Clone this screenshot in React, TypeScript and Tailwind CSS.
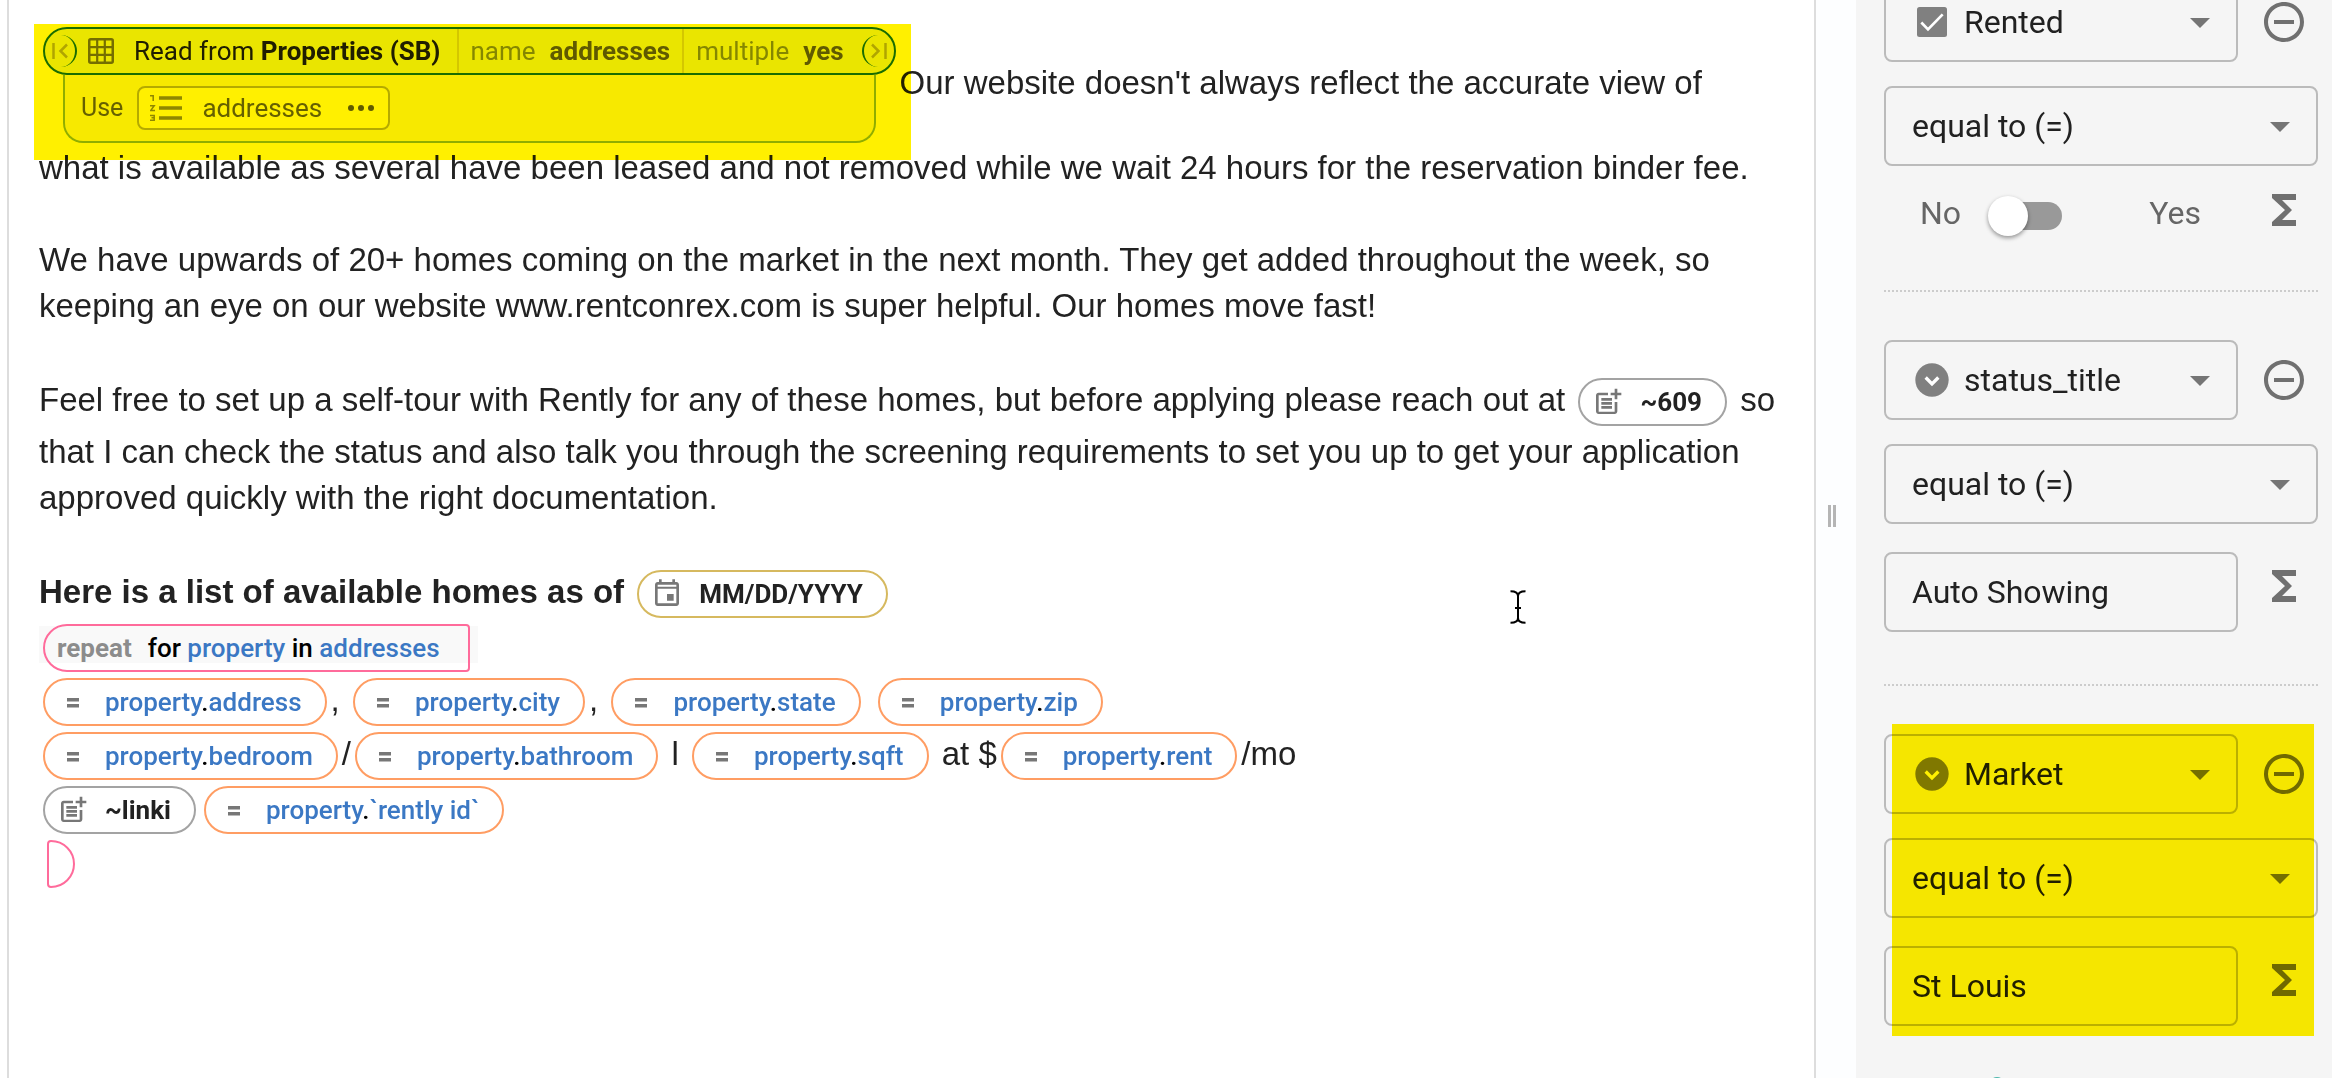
import React, { useState } from 'react';

const svgBase = 'shrink-0 fill-current';

function NoteAddIcon() {
  return (
    <svg viewBox="0 0 24 24" className={`${svgBase} size-8 text-[#777]`} aria-hidden="true">
      <path d="M17 19.22H5V7h7V5H5c-1.1 0-2 .9-2 2v12c0 1.1.9 2 2 2h12c1.1 0 2-.9 2-2v-7h-2v7.22z" />
      <path d="M19 2h-2v3h-3c.01.01 0 2 0 2h3v2.99c.01.01 2 0 2 0V7h3V5h-3V2zM7 9h8v2H7zM7 12v2h8v-2h-3zM7 15h8v2H7z" />
    </svg>
  );
}

function EqualIcon() {
  return (
    <svg viewBox="0 0 32 32" className={`${svgBase} size-8 text-[#777]`} aria-hidden="true">
      <path d="M10 12h12v3.500H10zM10 18h12v3.500H10z" />
    </svg>
  );
}

function DateIcon() {
  return (
    <svg viewBox="0 0 24 24" className={`${svgBase} size-8 text-[#777]`} aria-hidden="true">
      <path d="M17 12h-5v5h5v-5zM16 1v2H8V1H6v2H5c-1.110 0-1.990.9-1.990 2L3 19c0 1.100.890 2 2 2h14c1.100 0 2-.9 2-2V5c0-1.100-.9-2-2-2h-1V1h-2zm3 18H5V8h14v11zM5 6.500V5h14v1.500z" />
    </svg>
  );
}

function GridIcon() {
  return (
    <svg viewBox="0 0 26 26" className="size-[26px] shrink-0" fill="none" stroke="#757575" aria-hidden="true">
      <rect x="1.250" y="1.250" width="23.500" height="23.500" rx="1.500" strokeWidth="2.500" />
      <path d="M9.200 1v24M16.800 1v24M1 9.200h24M1 16.800h24" strokeWidth="2.200" />
    </svg>
  );
}

function NumberedListIcon() {
  return (
    <svg viewBox="0 0 32 26" className="h-[26px] w-8 shrink-0" fill="none" stroke="#8f8f8f" aria-hidden="true">
      <path d="M9 3h23M9 13h23M9 23h23" strokeWidth="3.500" />
      <path d="M0 .800h3.200V6M0 10.800h4.200l-3.400 4.600h4.200M0 20.500h4.200v4.700H0M1.500 22.800h2.700" strokeWidth="1.500" />
    </svg>
  );
}

function EdgeIcon({ flip = false }: { flip?: boolean }) {
  return (
    <svg
      viewBox="0 0 16 16"
      className={flip ? 'size-4 rotate-180' : 'size-4'}
      fill="none"
      stroke="#b0b0a0"
      strokeWidth="2.500"
      aria-hidden="true"
    >
      <path d="M1.500 0v16M15 1.500 8.500 8l6.500 6.500" />
    </svg>
  );
}

function SigmaButton({ label }: { label: string }) {
  return (
    <button type="button" aria-label={label} className="mb-3 mr-2.5 text-[#707070]">
      <svg viewBox="0 0 24 24" className="size-12 fill-current">
        <path d="M18 4H6v2l6.500 6L6 18v2h12v-3h-7l5-5-5-5h7z" />
      </svg>
    </button>
  );
}

function RemoveButton({ label }: { label: string }) {
  return (
    <button type="button" aria-label={label} className="mr-2.5 text-[#707070]">
      <svg viewBox="0 0 24 24" className="size-12 fill-current">
        <path d="M7 11v2h10v-2H7zm5-9C6.480 2 2 6.480 2 12s4.480 10 10 10 10-4.480 10-10S17.520 2 12 2zm0 18c-4.410 0-8-3.590-8-8s3.590-8 8-8 8 3.590 8 8-3.590 8-8 8z" />
      </svg>
    </button>
  );
}

function CheckboxIcon() {
  return (
    <svg viewBox="0 0 24 24" className="size-10" aria-hidden="true">
      <rect x="3" y="3" width="18" height="18" rx="1.500" fill="#808080" />
      <path d="m5.600 12.300 4 4.100 8.800-9" fill="none" stroke="#fff" strokeWidth="1.600" />
    </svg>
  );
}

function CircleDownIcon() {
  return (
    <svg viewBox="0 0 24 24" className="size-10" aria-hidden="true">
      <circle cx="12" cy="12" r="10" fill="#808080" />
      <path d="m8.200 10.500 3.800 3.800 3.800-3.800" fill="none" stroke="#fff" strokeWidth="2" />
    </svg>
  );
}

function Chip({ tone, icon, children }: { tone: string; icon: React.ReactNode; children: React.ReactNode }) {
  return (
    <span
      className={`mx-1 my-[3px] inline-flex h-12 items-center gap-4 rounded-3xl border-2 pl-3 pr-[23px] align-middle font-[Roboto,sans-serif] text-[26px] leading-8 whitespace-nowrap ${tone}`}
    >
      {icon}
      <span>{children}</span>
    </span>
  );
}

function Field({ name }: { name: string }) {
  return (
    <Chip tone="border-[#ff9d63] font-medium text-[#3b78c4]" icon={<EqualIcon />}>
      property<span className="text-black">.</span>
      {name}
    </Chip>
  );
}

function Dropdown({ label, value, icon }: { label: string; value: string; icon?: React.ReactNode }) {
  return (
    <div className="relative grow">
      {icon && <span className="pointer-events-none absolute inset-y-0 left-7 flex items-center">{icon}</span>}
      <select
        aria-label={label}
        defaultValue={value}
        className={`block h-20 w-full appearance-none rounded-lg border-2 border-[#bbb] bg-transparent text-[32px] leading-10 text-[#212121] ${icon ? 'pl-[78px]' : 'pl-[26px]'}`}
      >
        <option>{value}</option>
      </select>
      <span className="pointer-events-none absolute inset-y-0 right-3.5 flex items-center text-[#757575]">
        <svg viewBox="0 0 24 24" className="size-12 fill-current" aria-hidden="true">
          <path d="m7 10 5 5 5-5z" />
        </svg>
      </span>
    </div>
  );
}

function Condition({ field, icon, value }: { field: string; icon: React.ReactNode; value?: string }) {
  const [text, setText] = useState(value ?? '');
  return (
    <section className="flex flex-col">
      <div className="flex items-center gap-[22px]">
        <Dropdown label="Field" value={field} icon={icon} />
        <RemoveButton label={`Remove ${field}`} />
      </div>
      <div className="mt-6 flex">
        <Dropdown label={`${field} comparison`} value="equal to (=)" />
      </div>
      {value === undefined ? (
        <div className="mt-7 flex h-11 items-center">
          <label className="flex grow items-center pl-9 pr-[59px] text-[32px] leading-10 text-[#666]">
            <span className="mb-1.5">No</span>
            <input
              type="checkbox"
              role="switch"
              aria-label={field}
              className="relative ml-[33px] h-7 w-[68px] appearance-none rounded-full bg-[#999] before:absolute before:-left-1.5 before:-top-1.5 before:size-10 before:rounded-full before:bg-white before:shadow-[0_2px_4px_rgba(0,0,0,0.4)] checked:before:left-8"
            />
            <span className="mb-1.5 ml-auto">Yes</span>
          </label>
          <SigmaButton label={`${field} formula`} />
        </div>
      ) : (
        <div className="mt-7 flex items-center gap-[22px]">
          <input
            aria-label={`${field} value`}
            value={text}
            onChange={(e) => setText(e.target.value)}
            className="block h-20 min-w-0 grow rounded-lg border-2 border-[#bbb] bg-transparent px-[26px] text-[32px] leading-10 text-[#212121]"
          />
          <SigmaButton label={`${field} formula`} />
        </div>
      )}
    </section>
  );
}

function ReadBlock() {
  return (
    <span className="relative mx-1 my-0.5 inline-block align-middle font-[Roboto,sans-serif] text-[26px] leading-8 whitespace-nowrap">
      <span className="flex h-12 items-stretch rounded-3xl border-2 border-[#1a7340] bg-[#eaf4ea] text-[#202020]">
        <span className="flex items-center pr-4">
          <span className="flex size-8 items-center justify-center rounded-full border-r-2 border-[#1a7340]">
            <EdgeIcon />
          </span>
          <span className="ml-[11px] mr-5 flex">
            <GridIcon />
          </span>
          <span>
            Read from <b>Properties (SB)</b>
          </span>
        </span>
        <span className="flex items-center gap-3.5 border-l-2 border-[#d4d4c8] px-3 text-[#858f80]">
          name <b className="text-[#606060]">addresses</b>
        </span>
        <span className="flex items-center gap-3.5 border-l-2 border-[#d4d4c8] pl-3 text-[#858f80]">
          multiple <b className="text-[#606060]">yes</b>
        </span>
        <span className="ml-[18px] flex size-8 items-center justify-center self-center rounded-full border-l-2 border-[#1a7340]">
          <EdgeIcon flip />
        </span>
      </span>
      <span className="mx-5 flex h-[68px] items-center gap-3.5 rounded-b-[20px] border-2 border-t-0 border-[#90b890] bg-[#f7f8f7] pl-4 text-[#666]">
        <span className="text-[25px]">Use</span>
        <button
          type="button"
          className="flex h-11 items-center rounded-lg border-2 border-[#b5b5b5] bg-white pl-[11px] pr-3.5"
        >
          <NumberedListIcon />
          <span className="ml-5 mr-[26px]">addresses</span>
          <svg viewBox="0 0 26 6" className="h-1.5 w-[26px]" fill="#606060" aria-hidden="true">
            <circle cx="3" cy="3" r="3" />
            <circle cx="13" cy="3" r="3" />
            <circle cx="23" cy="3" r="3" />
          </svg>
        </button>
      </span>
      <span className="pointer-events-none absolute -bottom-[17px] -left-[9px] -right-[15px] -top-[3px] bg-[#fff000] mix-blend-multiply" />
    </span>
  );
}

export default function App() {
  return (
    <div className="flex h-screen overflow-hidden bg-white font-[Roboto,sans-serif]">
      <main className="relative ml-[7px] min-w-0 grow border-x-2 border-[#ddd] pl-[30px] pr-6 pt-[25px] font-['Liberation_Sans',Arial,sans-serif] text-[33px] leading-[46px] text-[#222]">
        <p className="mb-[46px]">
          <ReadBlock />
          Our website doesn't always reflect the accurate view of what&nbsp;is available as several have been leased and
          not removed while we wait 24 hours for the reservation binder fee.
        </p>
        <p className="mb-[46px]">
          We have upwards of 20+ homes coming on the market in the next month. They get added throughout the week, so
          keeping an eye on our website www.rentconrex.com is super helpful. Our homes move fast!
        </p>
        <p className="mb-[46px]">
          Feel free to set up a self-tour with Rently for any of these homes, but before applying please reach out at{' '}
          <Chip tone="border-[#a3a3a3] font-bold text-[#222]" icon={<NoteAddIcon />}>
            ~609
          </Chip>{' '}
          so that I can check the status and also talk you through the screening requirements to set you up to get your
          application approved quickly with the right documentation.
        </p>
        <p>
          <b>Here is a list of available homes as of </b>
          <Chip tone="border-[#d6b95f] font-bold text-[#222]" icon={<DateIcon />}>
            MM/DD/YYYY
          </Chip>
        </p>
        <div>
          <span className="relative inline-block align-middle font-[Roboto,sans-serif] text-[26px] leading-8 before:absolute before:inset-x-0 before:bottom-3 before:top-[5px] before:bg-[#f9f9f9]">
            <span className="relative mx-1 my-[3px] mr-2 flex h-12 items-center gap-4 rounded-l-3xl rounded-r-sm border-2 border-[#ff6b9b] pl-3 pr-7 font-medium text-black">
              <b className="text-[26px] text-[#8c8c8c]">repeat</b>
              <span>
                for <span className="text-[#3b78c4]">property</span> in{' '}
                <span className="text-[#3b78c4]">addresses</span>
              </span>
            </span>
          </span>
        </div>
        <div>
          <Field name="address" />, <Field name="city" />, <Field name="state" /> <Field name="zip" />
        </div>
        <div>
          <Field name="bedroom" />/<Field name="bathroom" /> l <Field name="sqft" /> at $<Field name="rent" />
          /mo
        </div>
        <div>
          <Chip tone="border-[#a3a3a3] font-bold text-[#222]" icon={<NoteAddIcon />}>
            ~linki
          </Chip>
          <Field name="`rently id`" />
        </div>
        <div>
          <span className="mx-2 my-[3px] inline-block h-12 w-7 rounded-l-sm rounded-r-3xl border-2 border-[#ff6b9b] align-middle" />
        </div>
        <svg
          viewBox="0 0 16 34"
          className="pointer-events-none absolute left-[1501px] top-[590px] h-[34px] w-4"
          fill="none"
          stroke="#000"
          strokeWidth="2"
          aria-hidden="true"
        >
          <path d="M.500 1.200C5 1.200 8 2.500 8 6v22c0 3.500-3 4.800-7.500 4.800M15.500 1.200C11 1.200 8 2.500 8 6v22c0 3.500 3 4.800 7.500 4.800M5 18h6" />
        </svg>
      </main>

      <div
        role="separator"
        aria-orientation="vertical"
        className="flex w-10 shrink-0 items-center justify-center gap-0.5 bg-[#fdfeff] pb-[46px] pr-2"
      >
        <span className="h-[22px] w-[3px] bg-[#b5b5b5]" />
        <span className="h-[22px] w-[3px] bg-[#b5b5b5]" />
      </div>

      <aside className="w-[476px] shrink-0 bg-[#f5f5f5] pl-7 pr-3.5">
        <div className="-mt-[18px]">
          <Condition field="Rented" icon={<CheckboxIcon />} />
          <hr className="mb-12 mt-[52px] border-t-2 border-dotted border-[#ccc]" />
          <Condition field="status_title" icon={<CircleDownIcon />} value="Auto Showing" />
          <hr className="mb-12 mt-[52px] border-t-2 border-dotted border-[#ccc]" />
          <div className="relative">
            <Condition field="Market" icon={<CircleDownIcon />} value="St Louis" />
            <span className="pointer-events-none absolute -inset-y-2.5 left-2 right-1 bg-[#fff000] mix-blend-multiply" />
          </div>
          <button type="button" aria-label="Add condition" className="ml-[105px] mt-[51px] block">
            <svg viewBox="0 0 16 16" className="size-4" fill="none" stroke="#4db6ac" strokeWidth="2">
              <circle cx="8" cy="8" r="7" />
              <path d="M8 4v8M4 8h8" />
            </svg>
          </button>
        </div>
      </aside>
    </div>
  );
}
